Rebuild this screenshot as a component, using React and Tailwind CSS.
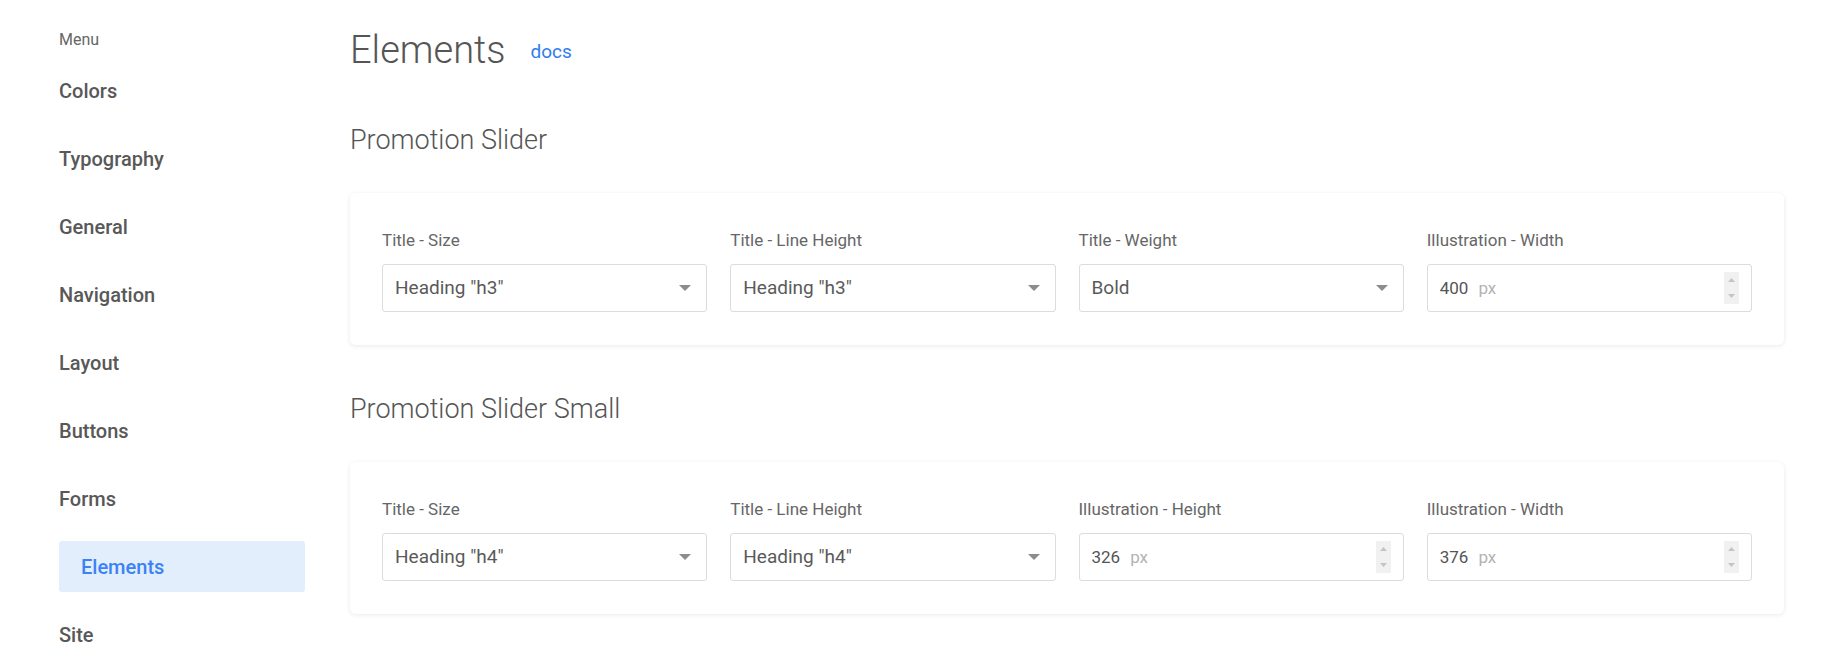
import React from "react";

const menu = [
  "Colors",
  "Typography",
  "General",
  "Navigation",
  "Layout",
  "Buttons",
  "Forms",
  "Elements",
  "Site",
];

const sections = [
  {
    title: "Promotion Slider",
    fields: [
      { label: "Title - Size", type: "select", value: 'Heading "h3"' },
      { label: "Title - Line Height", type: "select", value: 'Heading "h3"' },
      { label: "Title - Weight", type: "select", value: "Bold" },
      { label: "Illustration - Width", type: "number", value: "400" },
    ],
  },
  {
    title: "Promotion Slider Small",
    fields: [
      { label: "Title - Size", type: "select", value: 'Heading "h4"' },
      { label: "Title - Line Height", type: "select", value: 'Heading "h4"' },
      { label: "Illustration - Height", type: "number", value: "326" },
      { label: "Illustration - Width", type: "number", value: "376" },
    ],
  },
];

function SelectBox({ value }) {
  return (
    <div className="flex h-[48px] items-center justify-between rounded-[3px] border border-[#dcdcdc] bg-white pl-[12px] pr-[15px]">
      <span className="text-[19px] leading-[24px] text-[#5a5a5a]">{value}</span>
      <svg width="12" height="6" viewBox="0 0 12 6">
        <polygon points="0,0 12,0 6,6" fill="#8c8c8c" />
      </svg>
    </div>
  );
}

function NumberBox({ value }) {
  return (
    <div className="flex h-[48px] items-center justify-between rounded-[3px] border border-[#dcdcdc] bg-white pl-[12px] pr-[12px]">
      <div className="flex items-baseline">
        <span className="text-[17px] leading-[22px] text-[#555]">{value}</span>
        <span className="ml-[10px] text-[17px] leading-[22px] text-[#b3b3b3]">px</span>
      </div>
      {/* spinner */}
      <div className="flex h-[32px] w-[15px] flex-col items-center justify-between bg-[#f1f1f1] py-[6px]">
        <svg width="7" height="4" viewBox="0 0 7 4">
          <polygon points="0,4 7,4 3.5,0" fill="#c4c4c4" />
        </svg>
        <svg width="7" height="4" viewBox="0 0 7 4">
          <polygon points="0,0 7,0 3.5,4" fill="#c4c4c4" />
        </svg>
      </div>
    </div>
  );
}

export default function App() {
  return (
    <div className="flex min-h-screen bg-white font-['Roboto',sans-serif]">
      {/* Sidebar */}
      <aside className="ml-[59px] w-[246px] shrink-0 pt-[30px]">
        <div className="text-[16px] leading-[20px] text-[#666]">Menu</div>
        <nav className="mt-[15px] flex flex-col gap-[17px]">
          {menu.map((item) =>
            item === "Elements" ? (
              <div
                key={item}
                className="flex h-[51px] items-center rounded-[3px] bg-[#e3eefc] pl-[22px] text-[20px] font-medium text-[#3a82f5]"
              >
                {item}
              </div>
            ) : (
              <div
                key={item}
                className="flex h-[51px] items-center text-[20px] font-medium text-[#585858]"
              >
                {item}
              </div>
            )
          )}
        </nav>
      </aside>

      {/* Main */}
      <main className="ml-[45px] w-[1434px] pt-[27px]">
        <div className="flex items-center">
          <h1 className="text-[38px] font-light leading-[46px] text-[#555]">Elements</h1>
          <a className="ml-[25px] mt-[3px] text-[19px] leading-[24px] text-[#2f7cf0]">docs</a>
        </div>

        {sections.map((section, i) => (
          <section key={section.title} className={i === 0 ? "mt-[51px]" : "mt-[48px]"}>
            <h2 className="text-[27px] font-light leading-[32px] text-[#555]">
              {section.title}
            </h2>
            <div className="mt-[37px] rounded-[6px] bg-white px-[32px] pb-[33px] pt-[36px] shadow-[0_1px_5px_rgba(0,0,0,0.09)]">
              <div className="grid grid-cols-4 gap-x-[23px]">
                {section.fields.map((f, j) => (
                  <div key={j}>
                    <div className="text-[17px] leading-[22px] text-[#666]">{f.label}</div>
                    <div className="mt-[13px]">
                      {f.type === "select" ? (
                        <SelectBox value={f.value} />
                      ) : (
                        <NumberBox value={f.value} />
                      )}
                    </div>
                  </div>
                ))}
              </div>
            </div>
          </section>
        ))}
      </main>
    </div>
  );
}
